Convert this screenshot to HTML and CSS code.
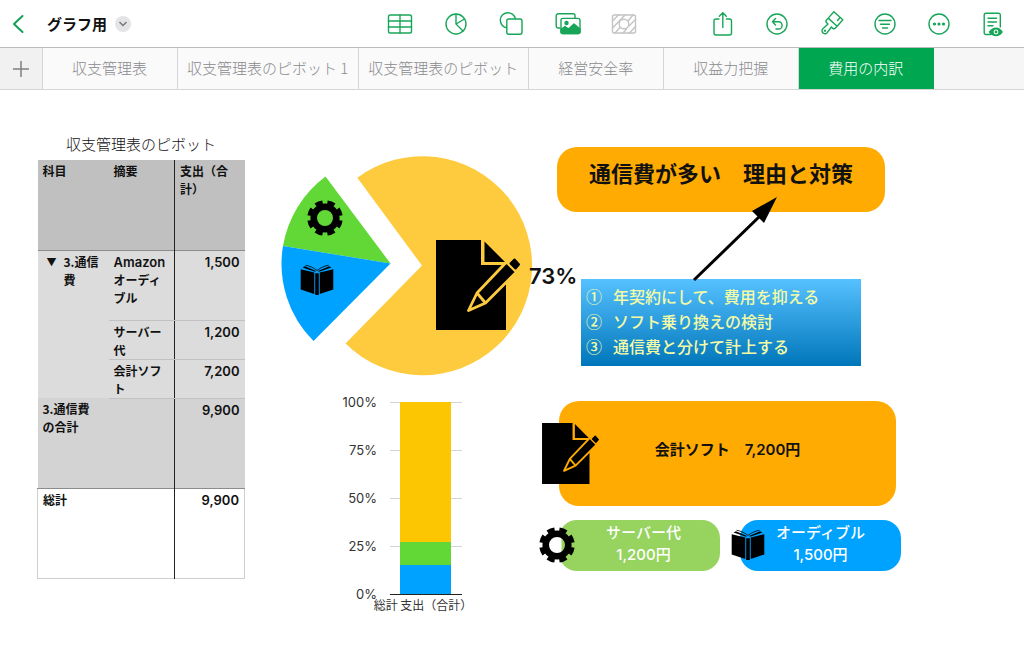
FILE: index.html
```html
<!DOCTYPE html>
<html lang="ja">
<head>
<meta charset="utf-8">
<meta name="viewport" content="width=device-width, initial-scale=1">
<title>グラフ用</title>
<link rel="stylesheet" href="styles.css">
</head>
<body>
<svg class="defs" aria-hidden="true">
  <symbol id="gear" viewBox="0 0 36 36">
    <circle cx="18" cy="18" r="11.300" fill="none" stroke="#000" stroke-width="6.600"/>
    <circle cx="18" cy="18" r="15.600" fill="none" stroke="#000" stroke-width="4.400" pathLength="16" stroke-dasharray="1.200 .8" stroke-dashoffset="-.4"/>
  </symbol>
  <symbol id="book" viewBox="0 0 34 31">
    <path d="M.7 5.300 14.300 8.600V30L.7 25.500zM33.300 5.300 19.700 8.600V30l13.600-4.500z"/>
    <path d="M15.200 9.200h3.600V31h-3.600z"/>
    <path d="M2.500 3.500 5 2.300 16 7 15 7.800zM31.500 3.500 29 2.300 18 7 19 7.800z"/>
    <path d="M5.500 1.200C10 2 14 4 17 6.500 20 4 24 2 28.500 1.200" fill="none" stroke="#000" stroke-width=".8"/>
  </symbol>
  <symbol id="memo" viewBox="0 0 84 90">
    <path d="M0 0H45V25H70V90H0z"/>
    <path d="M48.500 1.500V22H69z"/>
    <path d="M41 53 70.500 22 80.500 32 49.500 63 32.500 70.500z" fill="#000" stroke="currentColor" stroke-width="2.800" stroke-linejoin="round"/>
    <path d="M41 53 49.500 63" fill="none" stroke="currentColor" stroke-width="2.800"/>
    <path d="M74.500 23.500 78.500 19.500 83 24.500 79.500 28.500z" stroke="#000" stroke-width="2" stroke-linejoin="round"/>
  </symbol>
</svg>

<header class="toolbar">
  <div class="doc">
    <button class="back" aria-label="戻る"><svg width="14" height="20" viewBox="0 0 14 20"><path d="M11.500 2 3 10l8.500 8"/></svg></button>
    <h1 class="doc-name">グラフ用</h1>
    <button class="more" aria-label="書類メニュー"><svg width="10" height="6" viewBox="0 0 10 6"><path d="M1.500 1 5 4.500 8.500 1"/></svg></button>
  </div>
  <div class="tools tools-insert">
    <button class="tool" aria-label="表"><svg viewBox="0 0 28 28"><rect x="2.500" y="5" width="23" height="18" rx="1.800"/><path d="M2.500 11h23M2.500 17h23M14 5v18"/></svg></button>
    <button class="tool" aria-label="グラフ"><svg viewBox="0 0 28 28"><circle cx="14" cy="14" r="10"/><path d="M14 4v10l8.500-5M14 14l7 7"/></svg></button>
    <button class="tool" aria-label="図形"><svg viewBox="0 0 28 28"><path d="M8.500 17.800A7.600 7.600 0 1 1 17.300 8.600"/><rect x="8.800" y="9" width="15.200" height="15.200" rx="2"/></svg></button>
    <button class="tool" aria-label="メディア"><svg viewBox="0 0 28 28"><path d="M6 18H4.200A2 2 0 0 1 2.200 16V5.800a2 2 0 0 1 2-2H19a2 2 0 0 1 2 2V8"/><rect x="7" y="8.400" width="19" height="15.200" rx="2"/><path class="solid" d="M7 19.500l4-3 3.500 2.500 5.500-5 6 5V22a1.600 1.600 0 0 1-1.600 1.600H8.600A1.600 1.600 0 0 1 7 22z"/><circle class="solid" cx="12.500" cy="13" r="1.500"/></svg></button>
    <button class="tool tool-off" aria-label="背景" disabled><svg viewBox="0 0 28 28"><rect x="2.500" y="5" width="23" height="18" rx="1.800"/><circle cx="14" cy="14" r="4.800"/><path d="M2.500 11 8.500 5M2.500 18 15 5M5 23 10 17.500M13 23l3.500-4M25.500 9.500 19 16M25.500 16.500 19.500 23M18 11l5-6"/></svg></button>
  </div>
  <div class="tools tools-edit">
    <button class="tool" aria-label="共有"><svg viewBox="0 0 28 28"><path d="M10 9H7A2 2 0 0 0 5 11V23a2 2 0 0 0 2 2H20.500a2 2 0 0 0 2-2V11a2 2 0 0 0-2-2H17.500M13.800 17.500V3M10.300 6.300 13.800 2.700 17.300 6.300"/></svg></button>
    <button class="tool" aria-label="取り消す"><svg viewBox="0 0 28 28"><circle cx="14" cy="14" r="10"/><path d="M12.500 8.500 9.500 11.800l3 3.200M9.800 11.800H15.500a3.600 3.600 0 0 1 0 7.200H13"/></svg></button>
    <button class="tool" aria-label="書式"><svg viewBox="0 0 28 28"><g transform="rotate(42 14 14)"><path d="M8 3H20V11.500H8zM8 11.500h12v2.500a2 2 0 0 1-2 2H16.300L17 23a2.900 2.900 0 0 1-5.900 0L11.800 16H10a2 2 0 0 1-2-2zM16.500 3v4"/><circle class="solid" cx="14" cy="23" r=".5"/></g></svg></button>
    <button class="tool" aria-label="整理"><svg viewBox="0 0 28 28"><circle cx="14" cy="14" r="10"/><path d="M8 10.500H20M9.500 14.200h9M11.500 18h5"/></svg></button>
    <button class="tool" aria-label="その他"><svg viewBox="0 0 28 28"><circle cx="14" cy="14" r="10"/><g class="solid"><circle cx="9.500" cy="14" r=".9"/><circle cx="14" cy="14" r=".9"/><circle cx="18.500" cy="14" r=".9"/></g></svg></button>
    <button class="tool" aria-label="閲覧モード"><svg viewBox="0 0 28 28"><path d="M12 24.500H7A1.800 1.800 0 0 1 5.200 22.700V5A1.800 1.800 0 0 1 7 3.200H19.500A1.800 1.800 0 0 1 21.300 5V17M9 8.200h8.500M9 12h8.500M9 15.800h5"/><path class="solid" d="M10.500 22q3-3.800 6.500-3.800t6 3.800q-2.500 3.500-6 3.500T10.500 22z"/><circle cx="17" cy="22" r="1.700" fill="#fff" stroke="#fff"/><circle class="solid" cx="17" cy="22" r=".7"/></svg></button>
  </div>
</header>

<nav class="tabs">
  <button class="tab-add" aria-label="シートを追加"><svg width="18" height="18" viewBox="0 0 18 18"><path d="M9 1v16M1 9h16"/></svg></button>
  <button class="tab">収支管理表</button>
  <button class="tab">収支管理表のピボット 1</button>
  <button class="tab">収支管理表のピボット</button>
  <button class="tab">経営安全率</button>
  <button class="tab">収益力把握</button>
  <button class="tab tab-on">費用の内訳</button>
</nav>

<main class="sheet">
  <section class="pivot-area">
    <table class="pivot">
      <caption>収支管理表のピボット</caption>
      <colgroup><col class="c-subject"><col class="c-note"><col class="c-sum"></colgroup>
      <thead>
        <tr><th scope="col">科目</th><th scope="col">摘要</th><th scope="col">支出（合計）</th></tr>
      </thead>
      <tbody>
        <tr class="row-l"><th rowspan="3" scope="rowgroup"><div class="group"><span class="caret">▼</span><span>3.通信費</span></div></th><td class="item"><span class="latin">Amazon</span> オーディブル</td><td class="num">1,500</td></tr>
        <tr class="row-s"><td class="item">サーバー代</td><td class="num">1,200</td></tr>
        <tr class="row-s"><td class="item">会計ソフト</td><td class="num">7,200</td></tr>
        <tr class="subtotal"><th scope="row">3.通信費の合計</th><td></td><td class="num">9,900</td></tr>
      </tbody>
      <tfoot>
        <tr><th scope="row">総計</th><td></td><td class="num">9,900</td></tr>
      </tfoot>
    </table>
  </section>

  <section class="charts">
    <figure class="pie">
      <svg class="pie-plot" viewBox="281 155 252 222">
        <path fill="#fecb3e" d="M422 265.600 357.300 177.800A109.500 109.500 0 1 1 345.500 343.500z"/>
        <path fill="#61d836" d="M390.500 263.500 325.500 176.500A109 109 0 0 0 283 246z"/>
        <path fill="#00a2ff" d="M390.500 263.500 283 246A109 109 0 0 0 313.500 341z"/>
        <use href="#gear" x="307" y="200" width="36" height="36"/>
        <use href="#book" x="300" y="264" width="34" height="31"/>
        <use href="#memo" class="on-pie" x="436" y="240" width="84" height="90"/>
      </svg>
      <figcaption class="pie-label">73%</figcaption>
    </figure>
    <figure class="stack">
      <div class="axis"><span>100%</span><span>75%</span><span>50%</span><span>25%</span><span>0%</span></div>
      <div class="plot-col">
        <div class="plot">
          <div class="lines"><i></i><i></i><i></i><i></i><i class="base"></i></div>
          <div class="bar"><div class="seg-y" style="height:73%"></div><div class="seg-g" style="height:12%"></div><div class="seg-b" style="height:15%"></div></div>
        </div>
        <figcaption class="category">総計 支出（合計）</figcaption>
      </div>
    </figure>
  </section>

  <section class="notes">
    <h2 class="callout">通信費が多い　理由と対策</h2>
    <ol class="plan">
      <li><span>①</span>年契約にして、費用を抑える</li>
      <li><span>②</span>ソフト乗り換えの検討</li>
      <li><span>③</span>通信費と分けて計上する</li>
    </ol>
    <svg class="arrow" width="90" height="86" viewBox="0 0 90 86"><path d="M2 83 68 19" stroke="#000" stroke-width="3"/><path d="M85 0 60 14 72 26z"/></svg>
    <div class="card card-main"><svg class="badge badge-memo" viewBox="0 0 84 90"><use href="#memo"/></svg>会計ソフト　7,200円</div>
    <div class="pair">
      <div class="card card-green"><svg class="badge badge-gear" viewBox="0 0 36 36"><circle cx="18" cy="18" r="9" fill="#fff"/><path d="M22.500 10.500h5v15h-5z" fill="#96d35f"/><use href="#gear"/></svg><span>サーバー代</span><span>1,200円</span></div>
      <div class="card card-blue"><svg class="badge badge-book" viewBox="0 0 34 31"><use href="#book"/></svg><span>オーディブル</span><span>1,500円</span></div>
    </div>
  </section>
</main>
</body>
</html>
```
FILE: styles.css
```css
* { box-sizing: border-box; }
body {
  margin: 0;
  background: #fff;
  color: #111;
  font-family: "Noto Sans CJK JP", sans-serif;
}
button {
  margin: 0;
  padding: 0;
  border: 0;
  background: none;
  font: inherit;
  color: inherit;
}
svg { display: block; }
.defs { position: absolute; width: 0; height: 0; }

/* Toolbar */
.toolbar {
  display: flex;
  align-items: center;
  height: 48px;
  padding: 0 15px 0 11px;
  border-bottom: 1px solid #bcbcbc;
}
.doc { display: flex; align-items: center; flex: 1; }
.back svg { fill: none; stroke: #159f54; stroke-width: 2; stroke-linecap: round; stroke-linejoin: round; }
.doc-name { margin: 0 8px 0 22px; font-size: 15px; line-height: 24px; font-weight: 700; }
.more {
  display: flex;
  align-items: center;
  justify-content: center;
  width: 16px;
  height: 16px;
  border-radius: 50%;
  background: #e4e4e6;
}
.more svg { fill: none; stroke: #777; stroke-width: 1.5; }
.tools { display: flex; }
.tools-insert { gap: 24px; }
.tools-edit { gap: 22px; margin-left: 67px; }
.tool { display: flex; justify-content: center; width: 32px; }
.tool svg {
  width: 28px;
  height: 28px;
  fill: none;
  stroke: #18a558;
  stroke-width: 1.4;
  stroke-linecap: round;
  stroke-linejoin: round;
}
.tool .solid { fill: #18a558; }
.tool-off svg { stroke: #c4c4c4; }

/* Sheet tabs */
.tabs { display: flex; height: 42px; background: #f6f6f6; border-bottom: 1px solid #d6d6d6; }
.tab, .tab-add { border-right: 1px solid #d6d6d6; color: #8a8a8e; }
.tab {
  min-width: 135px;
  padding: 0 10px 2px 9px;
  background: #fafafa;
  font-size: 15px;
  font-weight: 300;
  white-space: nowrap;
}
.tab-add { display: flex; align-items: center; justify-content: center; width: 43px; background: #f1f1f1; }
.tab-add svg { stroke: #808080; stroke-width: 1.5; }
.tab-on { background: #00a650; border-color: #00a650; color: #fff; }

/* Sheet */
.sheet {
  display: grid;
  grid-template-columns: 208px 312px minmax(0, 1fr);
  align-items: start;
  padding: 43px 37px 32px;
}

/* Pivot table */
.pivot {
  width: 100%;
  table-layout: fixed;
  border-collapse: collapse;
  font-size: 12px;
  line-height: 18px;
}
.pivot caption { padding-bottom: 5px; font-size: 15px; line-height: 22px; font-weight: 300; }
.c-subject { width: 71px; }
.c-note { width: 66px; }
.pivot th, .pivot td {
  padding: 2px 5px 0;
  text-align: left;
  vertical-align: top;
  font-weight: 600;
}
.pivot tr > :last-child { border-left: 1px solid #222; }
.pivot thead { background: #bfc0bf; }
.pivot thead tr, .subtotal, .pivot tfoot tr { height: 90px; }
.pivot thead tr, .subtotal { border-bottom: 1px solid #8c8c8c; }
.pivot tbody { background: #dcdcdc; }
.pivot .row-l { height: 70px; }
.pivot .row-s { height: 38px; }
.row-l .item, .row-l .num, .row-s .item, .row-s .num { border-bottom: 1px solid #c2c2c2; }
.pivot .subtotal { background: #d3d3d3; }
.pivot .subtotal th { padding-right: 12px; }
.pivot tfoot tr { border: 1px solid #cfcfcf; border-top: 1px solid #8c8c8c; }
.pivot .num { font-family: Inter, sans-serif; font-size: 13px; text-align: right; }
.latin { font-family: Inter, sans-serif; font-size: 13px; line-height: 16px; }
.group { display: flex; gap: 7px; padding-left: 4px; margin-right: -5px; }
.caret { width: 10px; font-size: 10px; }

/* Charts */
.charts { padding: 22px 0 0 36px; }
.pie { position: relative; margin: 0 0 17px; }
.pie-plot { width: 252px; height: 222px; }
.on-pie { color: #fecb3e; }
.pie-label {
  position: absolute;
  left: 248px;
  top: 108px;
  font: 600 22px/26px Inter, sans-serif;
}
.stack { display: flex; gap: 13px; margin: 0; }
.axis {
  display: flex;
  flex-direction: column;
  justify-content: space-between;
  width: 96px;
  height: 208px;
  text-align: right;
  font: 400 13px/16px Inter, sans-serif;
  color: #333;
}
.plot-col { display: flex; flex-direction: column; align-items: center; width: 72px; padding-top: 8px; }
.plot { display: grid; width: 100%; height: 193px; }
.lines, .bar { grid-area: 1 / 1; display: flex; flex-direction: column; }
.lines { justify-content: space-between; }
.lines i { height: 1px; background: #d4d4d4; }
.lines .base { z-index: 1; background: #222; }
.bar { margin: 0 11px 1px 10px; }
.seg-y { background: #fcc603; }
.seg-g { background: #61d836; }
.seg-b { background: #00a2ff; }
.category { margin: 1px 6px 0 0; font-size: 12px; line-height: 18px; white-space: nowrap; color: #333; }

/* Notes and cards */
.notes { position: relative; padding-top: 14px; }
.callout {
  display: flex;
  align-items: center;
  justify-content: center;
  max-width: 328px;
  margin: 0 0 67px;
  padding: 9px 0 24px;
  border-radius: 20px;
  background: #ffab01;
  font-size: 22px;
  line-height: 32px;
  font-weight: 600;
}
.plan {
  max-width: 280px;
  margin: 0 0 35px 24px;
  padding: 5px 5px 7px;
  background: linear-gradient(#56c1ff, #0076ba);
  color: #f4fba6;
  font-size: 16px;
  line-height: 25px;
  font-weight: 500;
  list-style: none;
}
.plan li { display: flex; gap: 11px; }
.arrow { position: absolute; left: 135px; top: 64px; }
.card {
  position: relative;
  display: flex;
  flex-direction: column;
  align-items: center;
  font-family: Inter, "Noto Sans CJK JP", sans-serif;
  font-size: 15px;
  line-height: 22px;
  font-weight: 500;
}
.card-main {
  max-width: 337px;
  margin-left: 2px;
  padding: 38px 0 45px;
  border-radius: 20px;
  background: #ffab01;
  font-weight: 600;
}
.pair { display: flex; gap: 20px; margin: 14px 0 0 2px; }
.card-green, .card-blue { width: 161px; padding: 2px 0 5px; border-radius: 18px; color: #fff; }
.card-green { background: #96d35f; padding-left: 8px; }
.card-blue { background: #00a2ff; }
.badge { position: absolute; }
.badge-memo { left: -17px; top: 22px; width: 57px; height: 61px; color: #ffab01; }
.badge-gear { left: -20px; top: 7px; width: 36px; height: 36px; }
.badge-book { left: -9px; top: 9px; width: 34px; height: 31px; }
```
